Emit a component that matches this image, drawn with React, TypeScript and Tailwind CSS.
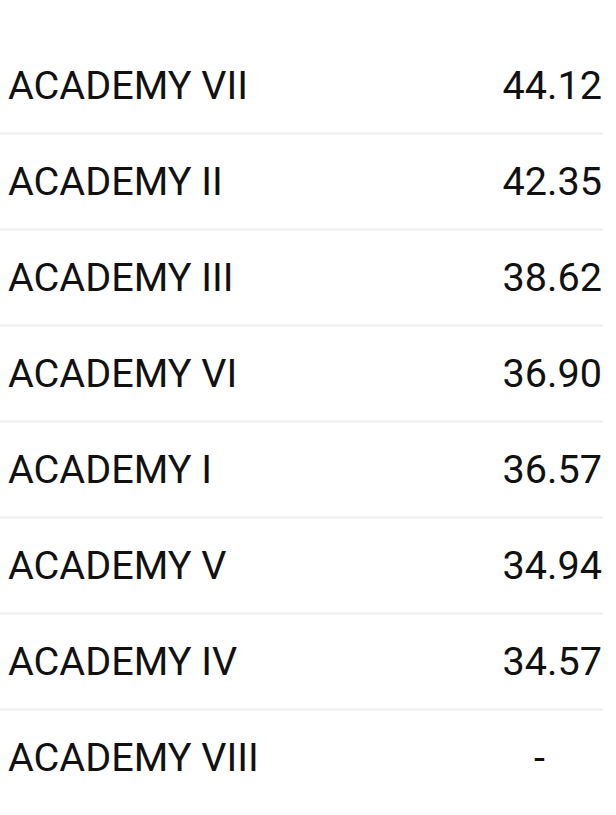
import React from "react";

const rows: [string, string][] = [
  ["ACADEMY VII", "44.12"],
  ["ACADEMY II", "42.35"],
  ["ACADEMY III", "38.62"],
  ["ACADEMY VI", "36.90"],
  ["ACADEMY I", "36.57"],
  ["ACADEMY V", "34.94"],
  ["ACADEMY IV", "34.57"],
  ["ACADEMY VIII", "-"],
];

export default function App() {
  return (
    <div className="h-[815px] w-[616px] overflow-hidden bg-white pt-[39px] text-[#111111]" style={{ fontFamily: "Roboto, sans-serif" }}>
      <div className="w-[603px]">
        {rows.map(([name, val], i) => (
          <div
            key={name}
            className={`flex h-[96px] items-start justify-between pl-[8px] pr-[1px] pt-[24px] ${i < rows.length - 1 ? "border-b-[3px] border-[#f2f2f2]" : ""}`}
          >
            <span className="text-[39.6px] leading-[46px]">{name}</span>
            {val === "-" ? (
              <span className="mr-[57px] text-[39.6px] leading-[46px]">-</span>
            ) : (
              <span className="text-[39.6px] leading-[46px]">{val}</span>
            )}
          </div>
        ))}
      </div>
    </div>
  );
}
